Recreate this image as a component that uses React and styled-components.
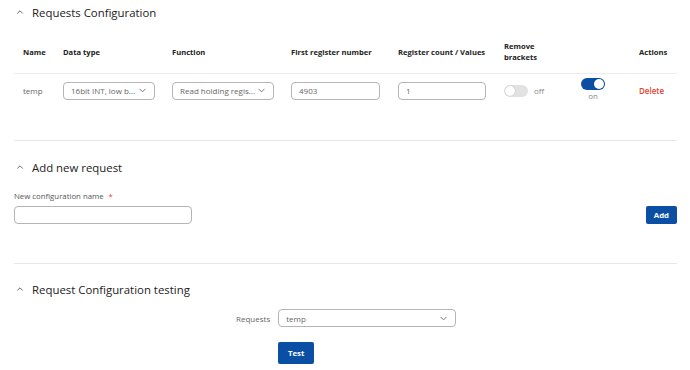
import React from 'react'
import styled, { createGlobalStyle } from 'styled-components'

const Global = createGlobalStyle`
  body {
    margin: 0;
    background: #fff;
    font-family: "Open Sans", "Noto Sans", sans-serif;
    color: #333;
  }
`

const Page = styled.main`
  padding: 0 13px 0 14px;
`

const Section = styled.section`
  border-bottom: ${({ last }) => (last ? 'none' : '1px solid #e8e8e8')};
  padding-bottom: ${({ pb }) => pb}px;
`

const Heading = styled.h2`
  display: flex;
  align-items: center;
  gap: 8px;
  margin: 0;
  padding: ${({ pt }) => pt}px 0 0 2px;
  height: 18px;
  font-size: 11.4px;
  font-weight: 400;
  color: #222;
`

const Chevron = ({ down, size = 8, color = '#555' }) => (
  <svg width={size} height={size} viewBox="0 0 10 10">
    <polyline
      points={down ? '2,3.5 5,6.5 8,3.5' : '2,6.5 5,3.5 8,6.5'}
      fill="none"
      stroke={color}
      strokeWidth="1.1"
      strokeLinecap="round"
      strokeLinejoin="round"
    />
  </svg>
)

const Grid = styled.div`
  display: grid;
  grid-template-columns: 40px 109px 119px 107px 106px 77px 58px 1fr;
  align-items: center;
  padding-left: 9px;
`

const HeadRow = styled(Grid)`
  margin-top: 10px;
  height: 42px;
  border-bottom: 1px solid #ececec;
  font-size: 7.6px;
  font-weight: 700;
  line-height: 11px;
  color: #222;
`

const BodyRow = styled(Grid)`
  height: 33px;
  font-size: 8px;
  color: #666;
`

const Box = styled.div`
  box-sizing: border-box;
  display: flex;
  align-items: center;
  justify-content: space-between;
  width: ${({ w }) => w}px;
  height: 18px;
  padding: 0 7px 0 7px;
  border: 1px solid #b5b5b8;
  border-radius: 4px;
  font-size: 8px;
  color: #666;
  background: #fff;
`

const ToggleWrap = styled.div`
  display: flex;
  flex-direction: ${({ stacked }) => (stacked ? 'column' : 'row')};
  align-items: center;
  gap: ${({ stacked }) => (stacked ? '0' : '6px')};
  width: max-content;
  margin-top: ${({ stacked }) => (stacked ? '-3px' : '0')};
  font-size: 8px;
  color: #888;
`

const Track = styled.span`
  position: relative;
  display: block;
  width: 24px;
  height: 12px;
  border-radius: 6px;
  background: ${({ on }) => (on ? '#0a4fa4' : '#e2e2e2')};
  &::after {
    content: '';
    position: absolute;
    top: 1px;
    left: ${({ on }) => (on ? '13px' : '1px')};
    width: 10px;
    height: 10px;
    border-radius: 50%;
    background: #fff;
    box-shadow: 0 0 1px rgba(0, 0, 0, 0.3);
  }
`

const Danger = styled.span`
  color: #e5462f;
  font-weight: 600;
`

const Field = styled.div`
  margin-top: 15px;
  display: flex;
  align-items: flex-end;
  justify-content: space-between;
`

const Label = styled.label`
  display: block;
  font-size: 7.8px;
  line-height: 10px;
  color: #555;
  margin-bottom: 5px;
  span {
    color: #e5462f;
    margin-left: 5px;
  }
`

const Button = styled.button`
  display: block;
  height: ${({ h }) => h}px;
  padding: 0 ${({ px }) => px}px;
  border: none;
  border-radius: 2px;
  background: #0a4fa4;
  color: #fff;
  font-family: inherit;
  font-size: 7.8px;
  font-weight: 700;
  cursor: pointer;
`

const TestRow = styled.div`
  display: flex;
  align-items: center;
  margin-top: 11px;
  margin-left: 222px;
  gap: 8px;
  font-size: 8px;
  color: #666;
`

const TestAction = styled.div`
  display: flex;
  margin: 15px 0 0 264px;
`

const SelectBox = ({ w, value }) => (
  <Box w={w}>
    <span>{value}</span>
    {value !== undefined && <Chevron down size={9} color="#777" />}
  </Box>
)

const InputBox = ({ w, value }) => (
  <Box w={w}>
    <span>{value}</span>
  </Box>
)

const columns = [
  'Name',
  'Data type',
  'Function',
  'First register number',
  'Register count / Values',
  <>Remove<br />brackets</>,
  '',
  'Actions',
]

export default function App() {
  return (
    <Page>
      <Global />
      <Section pb={33}>
        <Heading pt={3}>
          <Chevron />
          Requests Configuration
        </Heading>
        <HeadRow>
          {columns.map((c, i) => (
            <div key={i}>{c}</div>
          ))}
        </HeadRow>
        <BodyRow>
          <div>temp</div>
          <SelectBox w={92} value="16bit INT, low b..." />
          <SelectBox w={102} value="Read holding regis..." />
          <InputBox w={89} value="4903" />
          <InputBox w={88} value="1" />
          <ToggleWrap>
            <Track />
            off
          </ToggleWrap>
          <ToggleWrap stacked>
            <Track on />
            on
          </ToggleWrap>
          <Danger>Delete</Danger>
        </BodyRow>
      </Section>

      <Section pb={39}>
        <Heading pt={17}>
          <Chevron />
          Add new request
        </Heading>
        <Field>
          <div>
            <Label>
              New configuration name<span>*</span>
            </Label>
            <InputBox w={178} />
          </div>
          <Button h={18} px={8}>Add</Button>
        </Field>
      </Section>

      <Section last>
        <Heading pt={16}>
          <Chevron />
          Request Configuration testing
        </Heading>
        <TestRow>
          Requests
          <SelectBox w={178} value="temp" />
        </TestRow>
        <TestAction>
          <Button h={22} px={10}>Test</Button>
        </TestAction>
      </Section>
    </Page>
  )
}
